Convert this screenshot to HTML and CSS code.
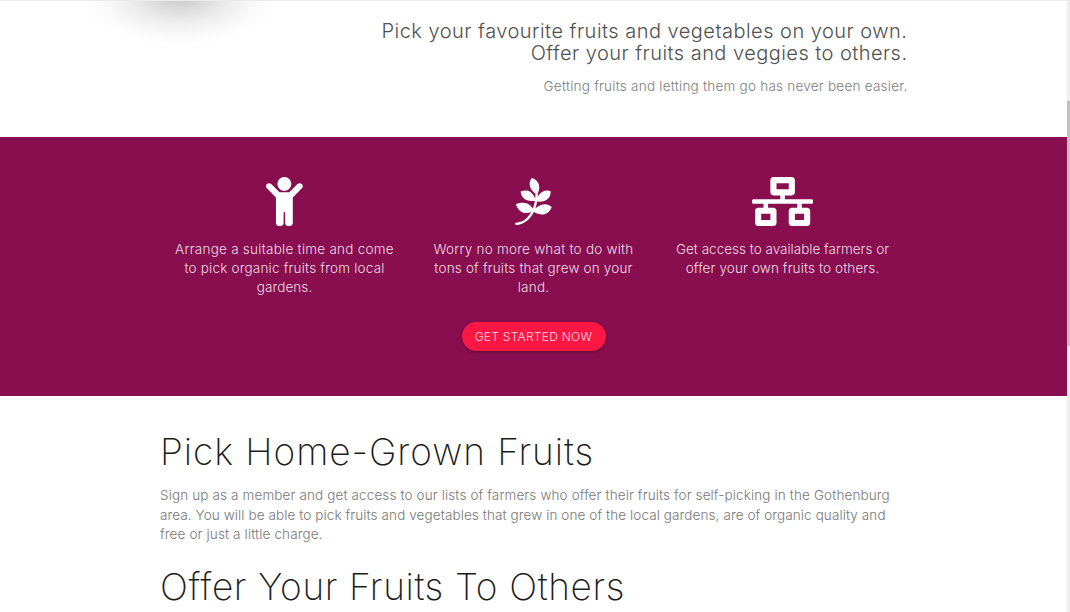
FILE: index.html
```html
<!DOCTYPE html>
<html lang="en">
<head>
<meta charset="utf-8">
<title>Fruit picking</title>
<link rel="stylesheet" href="styles.css">
</head>
<body>
<div class="page">
  <header class="hero">
    <h2 class="hero-title"><span class="line h1a">Pick your favourite fruits and vegetables on your own.</span><span class="line h1b">Offer your fruits and veggies to others.</span></h2>
    <p class="hero-sub"><span class="line h1c">Getting fruits and letting them go has never been easier.</span></p>
  </header>
  <section class="band">
    <div class="features">
      <div class="feature">
        <svg class="icon" viewBox="0 0 384 512"><path d="M120 72c0-39.765 32.235-72 72-72s72 32.235 72 72c0 39.764-32.235 72-72 72s-72-32.236-72-72zm254.627 1.373c-12.496-12.497-32.758-12.497-45.254 0L242.745 160H141.254L54.627 73.373c-12.496-12.497-32.758-12.497-45.254 0-12.497 12.497-12.497 32.758 0 45.255L104 213.254V480c0 17.673 14.327 32 32 32h16c17.673 0 32-14.327 32-32V368h16v112c0 17.673 14.327 32 32 32h16c17.673 0 32-14.327 32-32V213.254l94.627-94.627c12.497-12.496 12.497-32.757 0-45.254z"/></svg>
        <p><span class="line f1a">Arrange a suitable time and come</span><span class="line f1b">to pick organic fruits from local</span><span class="line f1c">gardens.</span></p>
      </div>
      <div class="feature">
        <svg class="icon" viewBox="0 0 384 512"><path d="M384 312.7c-55.1 136.7-187.1 54-187.1 54-40.5 81.8-107.4 134.4-184.6 134.7-16.1 0-16.6-24.4 0-24.4 64.4-.3 120.5-42.7 157.2-110.1-41.1 15.9-118.6 27.9-161.6-82.2 109-44.9 159.1 11.2 178.3 45.5 9.9-24.4 17-50.9 21.6-79.7 0 0-139.7 21.9-149.5-98.1 119.1-47.9 152.6 76.7 152.6 76.7 1.6-16.7 3.3-52.6 3.3-53.4 0 0-106.3-73.7-38.1-165.2 124.6 43 61.4 162.4 61.4 162.4.5 1.6.5 23.8 0 33.4 0 0 45.2-89 136.4-57.5-4.2 134-141.9 106.4-141.9 106.4-4.4 27.4-11.2 53.4-20 77.5 0 0 83-91.8 172-20z"/></svg>
        <p><span class="line f2a">Worry no more what to do with</span><span class="line f2b">tons of fruits that grew on your</span><span class="line f2c">land.</span></p>
      </div>
      <div class="feature">
        <svg class="icon" viewBox="0 0 640 512"><path d="M640 264v-16c0-8.84-7.16-16-16-16H344v-40h72c17.67 0 32-14.33 32-32V32c0-17.67-14.33-32-32-32H224c-17.67 0-32 14.33-32 32v128c0 17.67 14.33 32 32 32h72v40H16c-8.84 0-16 7.16-16 16v16c0 8.84 7.16 16 16 16h104v40H64c-17.67 0-32 14.33-32 32v128c0 17.67 14.33 32 32 32h160c17.67 0 32-14.33 32-32V352c0-17.67-14.33-32-32-32h-56v-40h304v40h-56c-17.67 0-32 14.33-32 32v128c0 17.67 14.33 32 32 32h160c17.67 0 32-14.33 32-32V352c0-17.67-14.33-32-32-32h-56v-40h104c8.84 0 16-7.16 16-16zM256 128V64h128v64H256zm-64 320H96v-64h96v64zm352 0h-96v-64h96v64z"/></svg>
        <p><span class="line f3a">Get access to available farmers or</span><span class="line f3b">offer your own fruits to others.</span></p>
      </div>
    </div>
    <a class="cta">GET STARTED NOW</a>
  </section>
  <main class="content">
    <h1><span class="line c1">Pick Home-Grown Fruits</span></h1>
    <p><span class="line c2">Sign up as a member and get access to our lists of farmers who offer their fruits for self-picking in the Gothenburg</span><span class="line c3">area. You will be able to pick fruits and vegetables that grew in one of the local gardens, are of organic quality and</span><span class="line c4">free or just a little charge.</span></p>
    <h1><span class="line c5">Offer Your Fruits To Others</span></h1>
  </main>
</div>
<div class="scrollbar"><div class="thumb"></div></div>
</body>
</html>
```
FILE: styles.css
```css
* { box-sizing: border-box; }
body { margin: 0; width: 1070px; height: 612px; overflow: hidden; display: flex; background: #fff; font-family: Inter, "Open Sans", sans-serif; font-weight: 300; }
h1, h2, p { margin: 0; font-weight: 300; }
.line { display: block; white-space: nowrap; }
.page { width: 1067px; height: 612px; overflow: hidden; }
.hero { height: 137px; padding: 19px 159.5px 0 0; text-align: right; border-top: 1px solid #ebebeb; background: radial-gradient(ellipse 98px 46px at 180px -2px, #cbcbcb 0%, #dcdcdc 25%, #eeeeee 52%, #fafafa 80%, #fff 100%) no-repeat; }
.hero-title { font-size: 20px; line-height: 22px; font-weight: 300; color: #505050; }
.hero-sub { margin-top: 12px; font-size: 13.5px; line-height: 20px; color: #7c7c7c; }
.h1a { letter-spacing: .48px; }
.h1b { letter-spacing: .46px; }
.h1c { letter-spacing: .24px; }
.band { height: 259px; padding-top: 40px; background: #880e4f; display: flex; flex-direction: column; align-items: center; }
.features { display: flex; width: 747px; height: 145px; color: #efdce6; }
.feature { width: 249px; text-align: center; }
.icon { display: block; height: 49px; margin: 0 auto 13.5px; fill: #fff; }
.feature p { font-size: 13.5px; line-height: 19.4px; }
.f1a { letter-spacing: .25px; }
.f1b { letter-spacing: .2px; }
.f1c { letter-spacing: .1px; }
.f2a { letter-spacing: .23px; }
.f2b { letter-spacing: .18px; }
.f2c { letter-spacing: .25px; }
.f3a { letter-spacing: 0; }
.f3b { letter-spacing: .12px; }
.cta { width: 144px; height: 29px; border-radius: 15px; background: #ff1744; color: #ffd9e0; font-size: 12px; line-height: 29px; letter-spacing: .28px; text-align: center; white-space: nowrap; box-shadow: 0 1px 3px rgba(0,0,0,.35); }
.content { padding: 34px 0 0 160px; }
.content h1 { font-size: 37px; line-height: 44px; font-weight: 200; color: #1c1c1c; }
.content p { margin: 12px 0 20.5px; font-size: 13.5px; line-height: 19.5px; color: #777; }
.c1 { letter-spacing: .95px; }
.c2 { letter-spacing: .13px; }
.c3 { letter-spacing: .1px; }
.c4 { letter-spacing: .14px; }
.c5 { letter-spacing: .62px; }
.scrollbar { width: 3px; height: 612px; padding-top: 101px; background: #efefef; }
.thumb { height: 245px; background: #c1c1c1; }
```
